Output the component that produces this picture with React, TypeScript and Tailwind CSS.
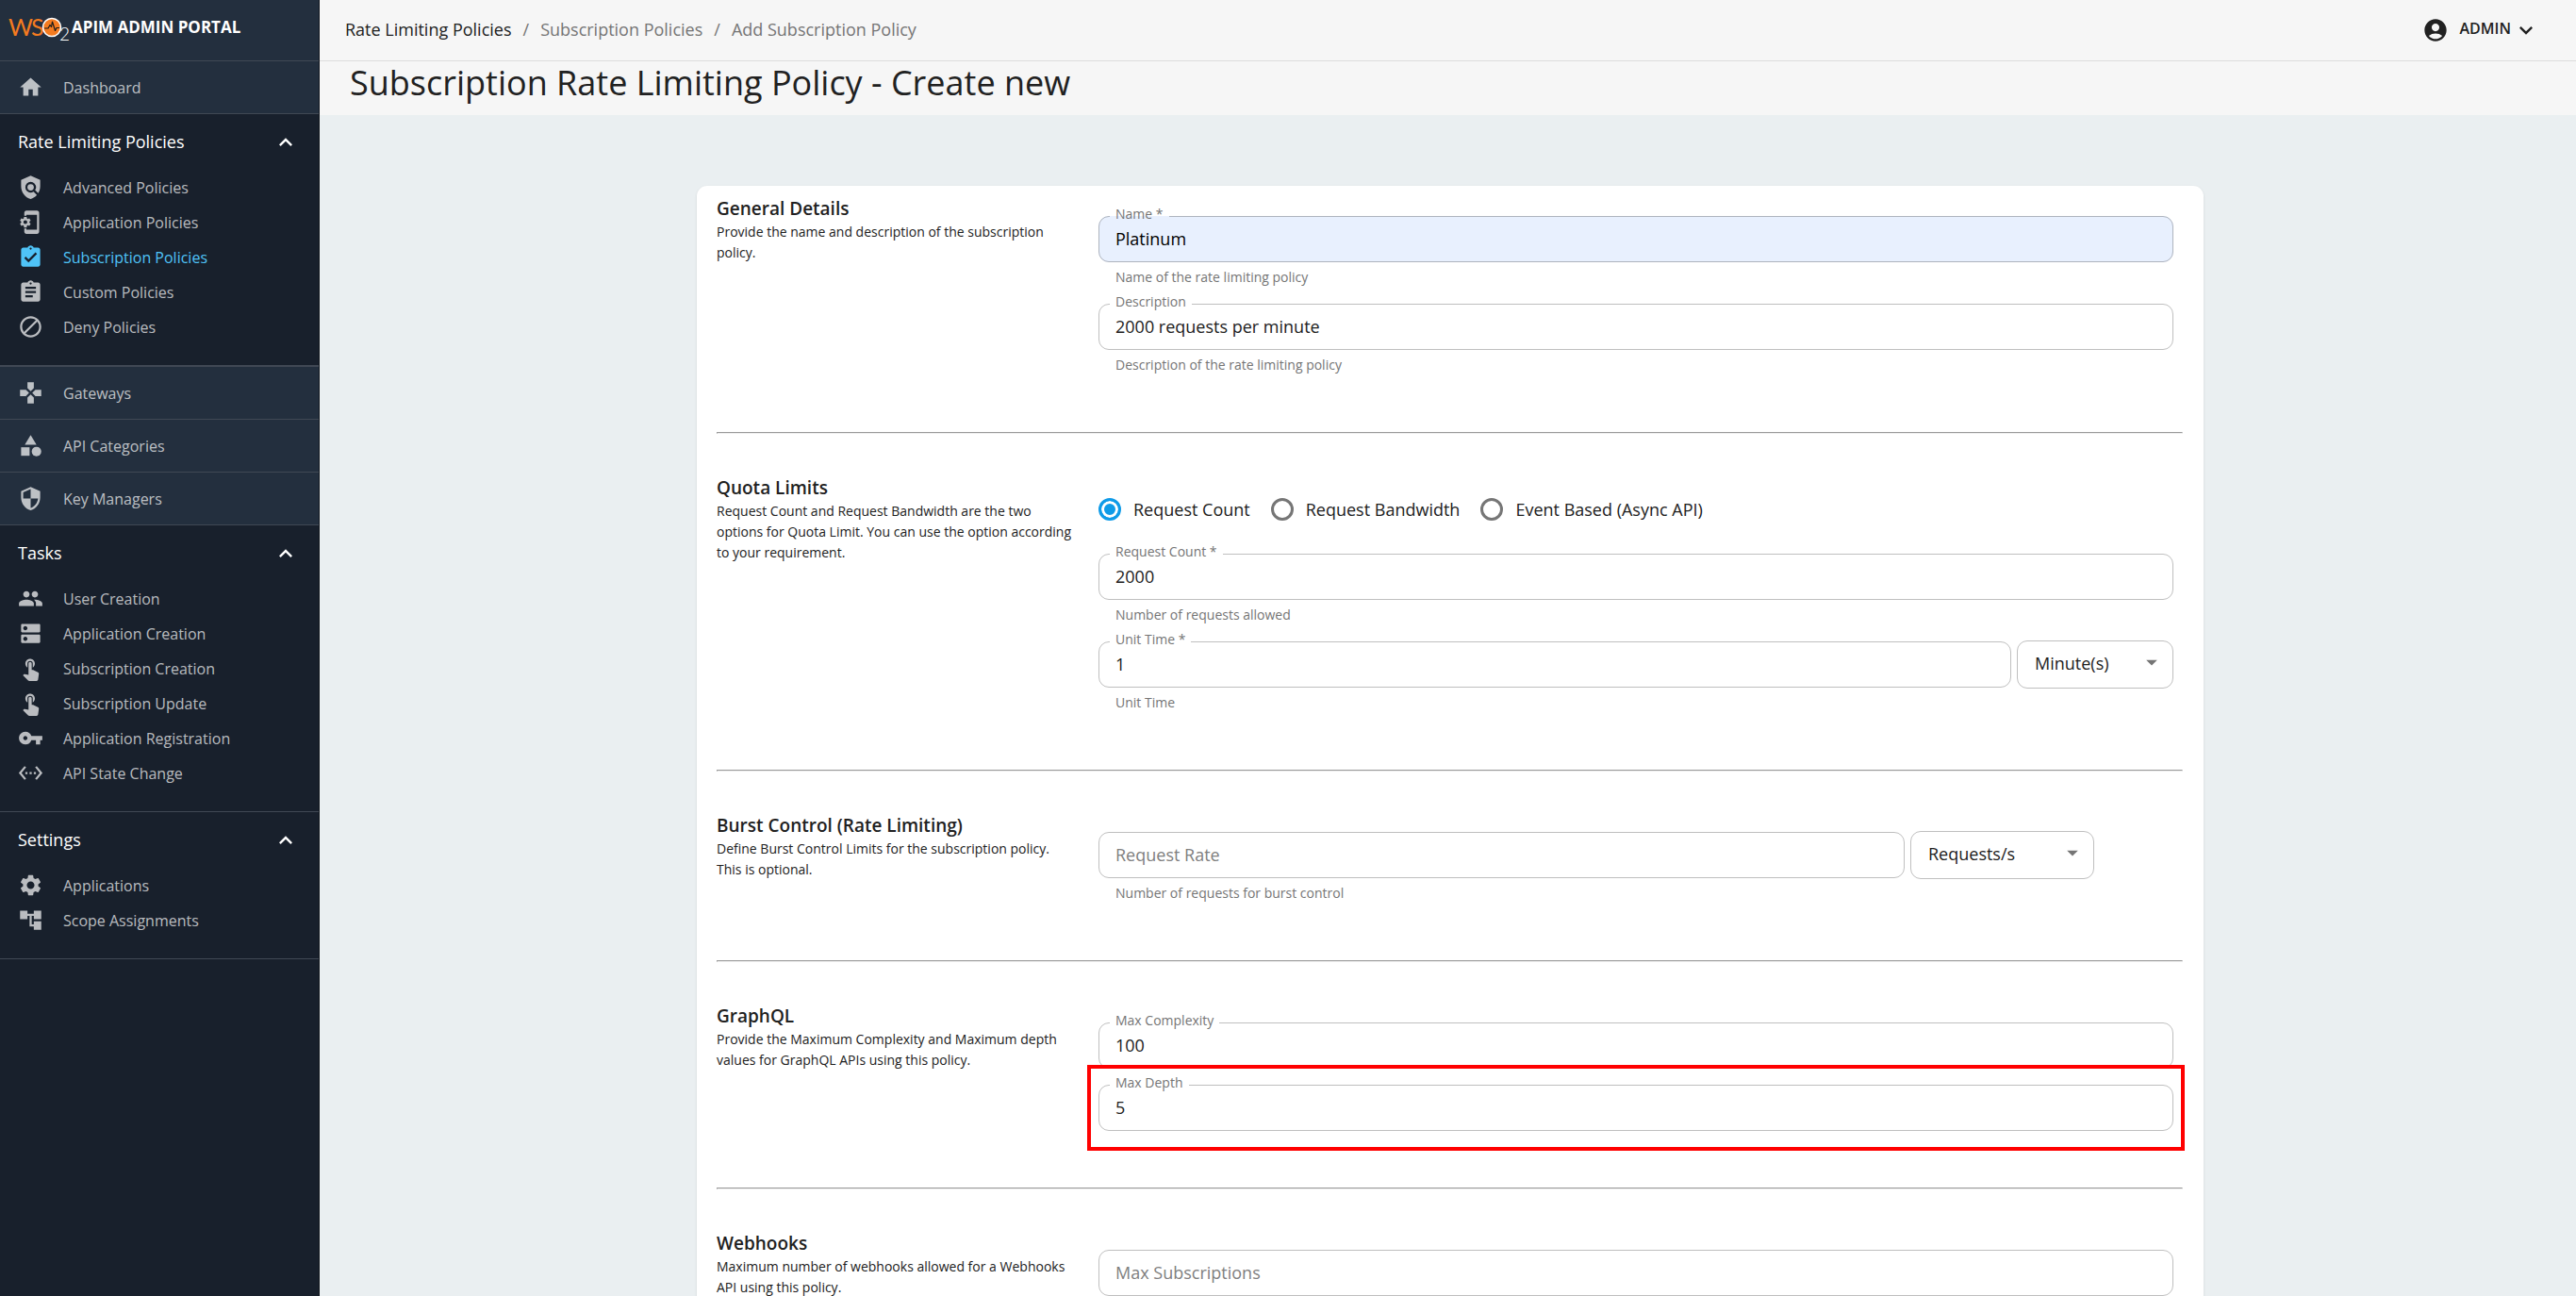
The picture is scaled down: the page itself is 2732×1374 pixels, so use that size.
import { useId } from "react";
import type { ReactNode } from "react";
import type { IconType } from "react-icons";
import {
  MdAccountCircle,
  MdAccountTree,
  MdArrowDropDown,
  MdAssignment,
  MdAssignmentTurnedIn,
  MdBlock,
  MdCategory,
  MdDns,
  MdExpandLess,
  MdExpandMore,
  MdGamepad,
  MdHome,
  MdPeople,
  MdPhonelinkSetup,
  MdPolicy,
  MdSecurity,
  MdSettings,
  MdSettingsEthernet,
  MdTouchApp,
  MdVpnKey,
} from "react-icons/md";

type NavItem = { label: string; icon: IconType; active?: boolean };

const ratePolicies: NavItem[] = [
  { label: "Advanced Policies", icon: MdPolicy },
  { label: "Application Policies", icon: MdPhonelinkSetup },
  { label: "Subscription Policies", icon: MdAssignmentTurnedIn, active: true },
  { label: "Custom Policies", icon: MdAssignment },
  { label: "Deny Policies", icon: MdBlock },
];

const tasks: NavItem[] = [
  { label: "User Creation", icon: MdPeople },
  { label: "Application Creation", icon: MdDns },
  { label: "Subscription Creation", icon: MdTouchApp },
  { label: "Subscription Update", icon: MdTouchApp },
  { label: "Application Registration", icon: MdVpnKey },
  { label: "API State Change", icon: MdSettingsEthernet },
];

const settings: NavItem[] = [
  { label: "Applications", icon: MdSettings },
  { label: "Scope Assignments", icon: MdAccountTree },
];

function Logo() {
  return (
    <svg viewBox="0 0 70 42" className="h-[42px] w-[70px] shrink-0" role="img" aria-label="WSO2">
      <text x="3" y="30" fontFamily="Lato" fontWeight="400" fontSize="25" fill="#f47b20">
        W
      </text>
      <text x="27" y="30" fontFamily="Lato" fontWeight="400" fontSize="25" fill="#f47b20">
        S
      </text>
      <circle cx="49" cy="21" r="9.500" fill="#f47b20" stroke="#fff" strokeWidth="1.600" />
      <path
        d="M41 22h4l2-3.500 1.500 2L49.500 15l3 9.500 1.500-3h3"
        fill="none"
        stroke="#1b1b1b"
        strokeWidth="1.200"
        strokeLinejoin="round"
      />
      <text x="57" y="35" fontFamily="Lato" fontWeight="300" fontSize="19" fill="#fff">
        2
      </text>
    </svg>
  );
}

function NavRow({ item }: { item: NavItem }) {
  const Icon = item.icon;
  return (
    <a
      href="#"
      aria-current={item.active ? "page" : undefined}
      className={
        item.active
          ? "flex h-[37px] items-center gap-[21px] pl-[19px] text-[#4fc3f7]"
          : "flex h-[37px] items-center gap-[21px] pl-[19px] text-white/70"
      }
    >
      <Icon className="size-[27px]" />
      <span>{item.label}</span>
    </a>
  );
}

function TopRow({ item }: { item: NavItem }) {
  const Icon = item.icon;
  return (
    <a
      href="#"
      className="flex h-14 items-center gap-[21px] border-b border-[#404854] bg-[#232f3e] pl-[19px] text-white/70"
    >
      <Icon className="size-[27px]" />
      <span>{item.label}</span>
    </a>
  );
}

function NavSection({ title, items }: { title: string; items: NavItem[] }) {
  return (
    <section className="border-b border-[#404854] pb-[22px]">
      <button
        type="button"
        className="flex h-[59px] w-full items-center justify-between pr-[21px] pl-[19px] text-[18px] text-white"
      >
        {title}
        <MdExpandLess className="size-7" />
      </button>
      {items.map((item) => (
        <NavRow key={item.label} item={item} />
      ))}
    </section>
  );
}

function Sidebar() {
  return (
    <nav className="w-[339px] shrink-0 border-r border-[#10151d] bg-[#18202c] text-[16px]">
      <div className="flex h-[65px] items-center border-b border-[#404854] bg-[#232f3e] pb-[6px] pl-[6px]">
        <Logo />
        <span className="text-[17px] font-bold whitespace-nowrap text-white">APIM ADMIN PORTAL</span>
      </div>
      <TopRow item={{ label: "Dashboard", icon: MdHome }} />
      <NavSection title="Rate Limiting Policies" items={ratePolicies} />
      <div className="border-t border-[#404854]">
        <TopRow item={{ label: "Gateways", icon: MdGamepad }} />
        <TopRow item={{ label: "API Categories", icon: MdCategory }} />
        <TopRow item={{ label: "Key Managers", icon: MdSecurity }} />
      </div>
      <NavSection title="Tasks" items={tasks} />
      <NavSection title="Settings" items={settings} />
    </nav>
  );
}

type FieldProps = {
  label: string;
  value?: string;
  helper?: string;
  filled?: boolean;
  addon?: ReactNode;
};

function Field({ label, value, helper, filled, addon }: FieldProps) {
  const id = useId();
  return (
    <div>
      <div className="flex items-center gap-[6px]">
        <div className="relative flex-1">
          <input
            id={id}
            defaultValue={value}
            placeholder={value ? undefined : label}
            aria-label={value ? undefined : label}
            className={
              filled
                ? "block h-[49px] w-full rounded-[11px] bg-[#e8f0fe] px-[18px] pb-[2px] text-[18px] text-black outline-none"
                : "block h-[49px] w-full rounded-[11px] px-[18px] pb-[2px] text-[18px] outline-none placeholder:text-[#808080]"
            }
          />
          {value ? (
            <fieldset className="pointer-events-none absolute inset-x-0 -top-[5px] bottom-0 rounded-[11px] border border-black/25 px-[11px]">
              <legend className="h-[11px] px-[6px] text-[14px] leading-[5px] text-[#757575]">
                <label htmlFor={id}>{label}</label>
              </legend>
            </fieldset>
          ) : (
            <div className="pointer-events-none absolute inset-0 rounded-[11px] border border-black/25" />
          )}
        </div>
        {addon}
      </div>
      {helper && <p className="mt-[6px] pb-px pl-[18px] text-[14px] leading-5 text-[#757575]">{helper}</p>}
    </div>
  );
}

function Select({ label, value, className }: { label: string; value: string; className: string }) {
  return (
    <div className={className}>
      <select
        aria-label={label}
        defaultValue={value}
        className="h-[51px] w-full appearance-none rounded-[11px] border border-black/25 pr-12 pb-[2px] pl-[18px] text-[18px] outline-none"
      >
        <option>{value}</option>
      </select>
      <MdArrowDropDown className="pointer-events-none absolute top-[9px] right-[9px] size-7 text-[#757575]" />
    </div>
  );
}

function FormSection({ title, text, children }: { title: string; text: string; children: ReactNode }) {
  return (
    <section className="flex gap-[25px] pr-[10px]">
      <div className="w-[380px] shrink-0">
        <h2 className="text-[19px] leading-7 font-semibold">{title}</h2>
        <p className="text-[14px] leading-[22px]">{text}</p>
      </div>
      <div className="flex-1">{children}</div>
    </section>
  );
}

function Rule() {
  return (
    <hr className="mt-[60px] mb-[43px] border border-t-[#9a9a9a] border-r-[#eeeeee] border-b-[#eeeeee] border-l-[#9a9a9a]" />
  );
}

function Radio({ label, checked }: { label: string; checked?: boolean }) {
  return (
    <label className="flex items-center gap-[13px] text-[18px]">
      <input
        type="radio"
        name="quota"
        defaultChecked={checked}
        className="size-6 appearance-none rounded-full border-[3px] border-[#767676] checked:border-[#0f9be8] checked:bg-[#0f9be8] checked:shadow-[inset_0_0_0_3px_white]"
      />
      {label}
    </label>
  );
}

export default function App() {
  return (
    <div className="flex h-screen overflow-hidden bg-[#eaeff1] font-['Open_Sans',sans-serif] text-[#212121]">
      <Sidebar />
      <div className="min-w-0 flex-1">
        <header className="flex h-[65px] items-center justify-between border-b border-[#dcdcdc] bg-[#f6f6f6] pr-[39px] pb-px pl-[27px]">
          <nav aria-label="Breadcrumb" className="flex gap-3 text-[18px] text-[#757575]">
            <a href="#" className="text-[#212121]">
              Rate Limiting Policies
            </a>
            <span>/</span>
            <a href="#">Subscription Policies</a>
            <span>/</span>
            <span>Add Subscription Policy</span>
          </nav>
          <button type="button" className="flex items-center text-[16px] font-semibold">
            <MdAccountCircle className="mr-3 size-7" />
            <span className="pb-[3px]">ADMIN</span>
            <MdExpandMore className="ml-[2px] size-7" />
          </button>
        </header>
        <div className="bg-[#f6f6f6] pb-[11px] pl-8">
          <h1 className="text-[36px] leading-[46px]">Subscription Rate Limiting Policy - Create new</h1>
        </div>

        <form className="mt-[75px] mr-[395px] ml-[400px] rounded-[11px] bg-white pt-[10px] pr-[22px] pb-20 pl-[21px] shadow-sm">
          <FormSection title="General Details" text="Provide the name and description of the subscription policy.">
            <div className="flex flex-col gap-[17px] pt-[22px]">
              <Field label="Name *" value="Platinum" helper="Name of the rate limiting policy" filled />
              <Field
                label="Description"
                value="2000 requests per minute"
                helper="Description of the rate limiting policy"
              />
            </div>
          </FormSection>
          <Rule />
          <FormSection
            title="Quota Limits"
            text="Request Count and Request Bandwidth are the two options for Quota Limit. You can use the option according to your requirement."
          >
            <div className="mt-4 mb-[26px] flex h-[42px] items-center gap-[22px]">
              <Radio label="Request Count" checked />
              <Radio label="Request Bandwidth" />
              <Radio label="Event Based (Async API)" />
            </div>
            <div className="flex flex-col gap-[17px]">
              <Field label="Request Count *" value="2000" helper="Number of requests allowed" />
              <Field
                label="Unit Time *"
                value="1"
                helper="Unit Time"
                addon={<Select label="Time unit" value="Minute(s)" className="relative -my-px w-[166px]" />}
              />
            </div>
          </FormSection>
          <Rule />
          <FormSection
            title="Burst Control (Rate Limiting)"
            text="Define Burst Control Limits for the subscription policy. This is optional."
          >
            <div className="w-[1056px] max-w-full pt-[21px]">
              <Field
                label="Request Rate"
                helper="Number of requests for burst control"
                addon={<Select label="Rate unit" value="Requests/s" className="relative -my-px w-[195px]" />}
              />
            </div>
          </FormSection>
          <Rule />
          <FormSection
            title="GraphQL"
            text="Provide the Maximum Complexity and Maximum depth values for GraphQL APIs using this policy."
          >
            <div className="flex flex-col gap-[17px] pt-[21px]">
              <Field label="Max Complexity" value="100" />
              <div className="relative">
                <Field label="Max Depth" value="5" />
                <div className="pointer-events-none absolute -inset-x-3 -top-[21px] -bottom-[21px] border-4 border-[#ff0000]" />
              </div>
            </div>
          </FormSection>
          <Rule />
          <FormSection title="Webhooks" text="Maximum number of webhooks allowed for a Webhooks API using this policy.">
            <div className="pt-[21px]">
              <Field label="Max Subscriptions" />
            </div>
          </FormSection>
        </form>
      </div>
    </div>
  );
}
